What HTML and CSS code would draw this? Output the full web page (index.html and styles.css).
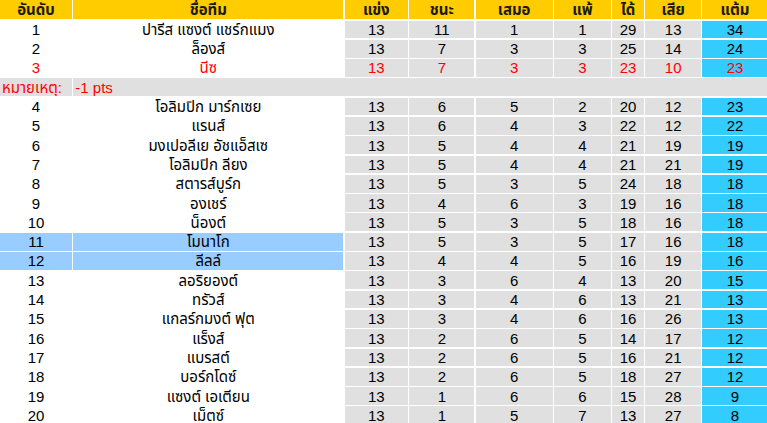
FILE: index.html
```html
<!DOCTYPE html>
<html lang="th">
<head>
<meta charset="utf-8">
<title>ตารางคะแนน</title>
<link rel="stylesheet" href="styles.css">
</head>
<body>
<div class="standings">
  <div class="hd">อันดับ</div><div class="hd">ชื่อทีม</div><div class="hd">แข่ง</div><div class="hd">ชนะ</div><div class="hd">เสมอ</div><div class="hd">แพ้</div><div class="hd">ได้</div><div class="hd">เสีย</div><div class="hd">แต้ม</div>

  <div class="c">1</div><div class="c">ปารีส แซงต์ แชร์กแมง</div><div class="n">13</div><div class="n">11</div><div class="n">1</div><div class="n">1</div><div class="n">29</div><div class="n">13</div><div class="p">34</div>
  <div class="c">2</div><div class="c">ล็องส์</div><div class="n">13</div><div class="n">7</div><div class="n">3</div><div class="n">3</div><div class="n">25</div><div class="n">14</div><div class="p">24</div>
  <div class="c red">3</div><div class="c red">นีซ</div><div class="n red">13</div><div class="n red">7</div><div class="n red">3</div><div class="n red">3</div><div class="n red">23</div><div class="n red">10</div><div class="p red">23</div>

  <div class="note">หมายเหตุ:</div><div class="note wide">-1 pts</div>

  <div class="c">4</div><div class="c">โอลิมปิก มาร์กเซย</div><div class="n">13</div><div class="n">6</div><div class="n">5</div><div class="n">2</div><div class="n">20</div><div class="n">12</div><div class="p">23</div>
  <div class="c">5</div><div class="c">แรนส์</div><div class="n">13</div><div class="n">6</div><div class="n">4</div><div class="n">3</div><div class="n">22</div><div class="n">12</div><div class="p">22</div>
  <div class="c">6</div><div class="c">มงเปอลีเย อัชแอ็สเซ</div><div class="n">13</div><div class="n">5</div><div class="n">4</div><div class="n">4</div><div class="n">21</div><div class="n">19</div><div class="p">19</div>
  <div class="c">7</div><div class="c">โอลิมปิก ลียง</div><div class="n">13</div><div class="n">5</div><div class="n">4</div><div class="n">4</div><div class="n">21</div><div class="n">21</div><div class="p">19</div>
  <div class="c">8</div><div class="c">สตารส์บูร์ก</div><div class="n">13</div><div class="n">5</div><div class="n">3</div><div class="n">5</div><div class="n">24</div><div class="n">18</div><div class="p">18</div>
  <div class="c">9</div><div class="c">องเชร์</div><div class="n">13</div><div class="n">4</div><div class="n">6</div><div class="n">3</div><div class="n">19</div><div class="n">16</div><div class="p">18</div>
  <div class="c">10</div><div class="c">น็องต์</div><div class="n">13</div><div class="n">5</div><div class="n">3</div><div class="n">5</div><div class="n">18</div><div class="n">16</div><div class="p">18</div>
  <div class="c hl">11</div><div class="c hl">โมนาโก</div><div class="n">13</div><div class="n">5</div><div class="n">3</div><div class="n">5</div><div class="n">17</div><div class="n">16</div><div class="p">18</div>
  <div class="c hl">12</div><div class="c hl">ลีลล์</div><div class="n">13</div><div class="n">4</div><div class="n">4</div><div class="n">5</div><div class="n">16</div><div class="n">19</div><div class="p">16</div>
  <div class="c">13</div><div class="c">ลอริยองต์</div><div class="n">13</div><div class="n">3</div><div class="n">6</div><div class="n">4</div><div class="n">13</div><div class="n">20</div><div class="p">15</div>
  <div class="c">14</div><div class="c">ทรัวส์</div><div class="n">13</div><div class="n">3</div><div class="n">4</div><div class="n">6</div><div class="n">13</div><div class="n">21</div><div class="p">13</div>
  <div class="c">15</div><div class="c">แกลร์กมงต์ ฟุต</div><div class="n">13</div><div class="n">3</div><div class="n">4</div><div class="n">6</div><div class="n">16</div><div class="n">26</div><div class="p">13</div>
  <div class="c">16</div><div class="c">แร็งส์</div><div class="n">13</div><div class="n">2</div><div class="n">6</div><div class="n">5</div><div class="n">14</div><div class="n">17</div><div class="p">12</div>
  <div class="c">17</div><div class="c">แบรสต์</div><div class="n">13</div><div class="n">2</div><div class="n">6</div><div class="n">5</div><div class="n">16</div><div class="n">21</div><div class="p">12</div>
  <div class="c">18</div><div class="c">บอร์กโดซ์</div><div class="n">13</div><div class="n">2</div><div class="n">6</div><div class="n">5</div><div class="n">18</div><div class="n">27</div><div class="p">12</div>
  <div class="c">19</div><div class="c">แซงต์ เอเตียน</div><div class="n">13</div><div class="n">1</div><div class="n">6</div><div class="n">6</div><div class="n">15</div><div class="n">28</div><div class="p">9</div>
  <div class="c">20</div><div class="c">เม็ตซ์</div><div class="n">13</div><div class="n">1</div><div class="n">5</div><div class="n">7</div><div class="n">13</div><div class="n">27</div><div class="p">8</div>
</div>
</body>
</html>
```

FILE: styles.css
```css
html, body {
  margin: 0;
  padding: 0;
  background: #ffffff;
}

body {
  font-family: "Liberation Sans", Tahoma, "Noto Sans Thai", "Noto Sans", sans-serif;
  font-size: 15px;
  color: #000000;
}

.standings {
  display: grid;
  grid-template-columns: 72px 270px 63.5px 65px 77px 57px 31.6px 56px 65px;
  grid-auto-rows: 17.8px;
  grid-template-rows: 19px;
  column-gap: 1.3px;
  row-gap: 1.5px;
  width: 767px;
}

.standings > div {
  display: flex;
  align-items: center;
  justify-content: center;
  line-height: 17px;
  white-space: nowrap;
  overflow: hidden;
}

.hd {
  background: #ffcc00;
  font-weight: bold;
  color: #1a1a00;
}

.c {
  background: #ffffff;
}

.n {
  background: #e0e0e0;
}

.p {
  background: #33ccff;
}

.hl {
  background: #99ccff;
}

.red {
  color: #ff0000;
}

.standings > .note {
  background: #e0e0e0;
  color: #ff0000;
  justify-content: flex-start;
  padding-left: 2px;
}

.standings > .note.wide {
  grid-column: 2 / 10;
  padding-left: 2px;
}
```
